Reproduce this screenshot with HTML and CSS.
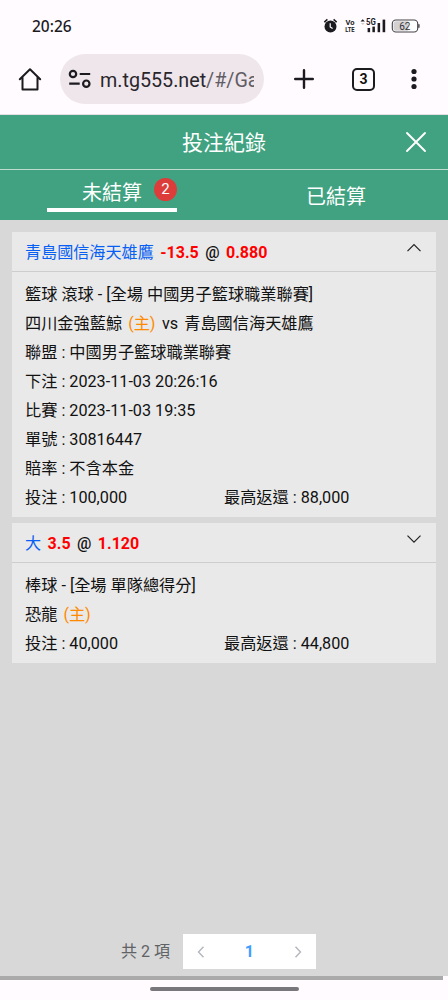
FILE: index.html
```html
<!DOCTYPE html>
<html lang="zh-Hant">
<head>
<meta charset="utf-8">
<meta name="viewport" content="width=device-width, initial-scale=1">
<title>投注紀錄</title>
<link rel="stylesheet" href="styles.css">
</head>
<body>
<div class="status-bar">
  <span class="clock">20:26</span>
  <svg class="status-icons" width="100" height="20" viewBox="0 0 100 20">
    <circle cx="7.500" cy="10.600" r="6" fill="#1c1b1f"/>
    <path d="M1.300 6.100 4.400 3.400M13.700 6.100 10.600 3.400" stroke="#1c1b1f" stroke-width="1.500"/>
    <path d="M7.200 7.200v3.800l2.400 1.600" fill="none" stroke="#fff" stroke-width="1.200"/>
    <g fill="#1c1b1f" class="icon-text">
      <text x="22.400" y="9" font-size="7.500" textLength="9" lengthAdjust="spacingAndGlyphs">Vo</text>
      <text x="22.200" y="16.400" font-size="7.500" textLength="9.400" lengthAdjust="spacingAndGlyphs">LTE</text>
      <text x="43" y="9.400" font-size="8.500" textLength="9.800" lengthAdjust="spacingAndGlyphs">5G</text>
      <path d="M37.500 5.600 39.700 3.300l2.200 2.300z"/>
      <path d="M38 7h3.600l-1.800 2z" fill="#ccc"/>
      <rect x="44.600" y="12" width="2.500" height="4.200"/>
      <rect x="49.400" y="10.600" width="2.500" height="5.600"/>
      <rect x="54.600" y="7" width="2.500" height="9.200"/>
      <rect x="59.600" y="3.600" width="2.600" height="12.600"/>
    </g>
    <rect x="69.300" y="4" width="25.400" height="12" rx="3.600" fill="#fff" stroke="#444347" stroke-width="1.100"/>
    <path d="M72.900 5.200h12.400v9.600H72.900a2.400 2.400 0 0 1-2.400-2.400V7.600a2.400 2.400 0 0 1 2.400-2.400z" fill="#d2d0d3"/>
    <rect x="95.200" y="8" width="1.400" height="4" rx=".7" fill="#444347"/>
    <text x="76.200" y="13.500" font-size="10" fill="#333" class="battery-text">62</text>
  </svg>
</div>
<div class="toolbar">
  <svg class="home" width="24" height="26" viewBox="0 0 24 26" fill="none" stroke="#1c1b1f" stroke-width="2" stroke-linejoin="round" stroke-linecap="round"><path d="M1.800 12.200 12 2.300 22.200 12.200M4.500 10.500V22.500h15V10.500"/></svg>
  <div class="address">
    <svg width="24" height="22" viewBox="0 0 24 22" fill="none" stroke="#1c1b1f" stroke-width="2.200"><circle cx="5" cy="6" r="3.200"/><circle cx="18.300" cy="15.700" r="3.200"/><path d="M11.700 6h10.500M1.200 15.700h10.500"/></svg>
    <span class="url">m.tg555.net<span class="path">/#/Ga</span></span>
  </div>
  <svg class="plus" width="20" height="20" viewBox="0 0 20 20" stroke="#1c1b1f" stroke-width="2.400" stroke-linecap="round"><path d="M10 1.200v17.600M1.200 10h17.600"/></svg>
  <span class="tab-count">3</span>
  <svg class="more" width="6" height="22" viewBox="0 0 6 22" fill="#1c1b1f"><circle cx="3" cy="3.500" r="2.600"/><circle cx="3" cy="11" r="2.600"/><circle cx="3" cy="18.500" r="2.600"/></svg>
</div>
<header class="title-bar">
  <h1>投注紀錄</h1>
  <svg class="close" width="22" height="22" viewBox="0 0 22 22" stroke="#fff" stroke-width="1.900" stroke-linecap="round"><path d="M2 2l18 18M20 2 2 20"/></svg>
</header>
<nav class="tabs">
  <div class="tab"><div class="tab-label active">未結算<span class="badge">2</span></div></div>
  <div class="tab"><div class="tab-label">已結算</div></div>
</nav>
<main class="content">
  <section class="card">
    <div class="card-head">
      <p><span class="team">青島國信海天雄鷹</span> <b>-13.5</b> <i>@</i> <b>0.880</b></p>
      <svg width="16" height="10" viewBox="0 0 16 10" fill="none" stroke="#222" stroke-width="1.200"><path d="M1.500 8.200 8 1.600l6.500 6.600"/></svg>
    </div>
    <div class="card-body">
      <p>籃球 滾球 - [全場 中國男子籃球職業聯賽]</p>
      <p>四川金強藍鯨 <span class="home-tag">(主)</span> vs <span class="away">青島國信海天雄鷹</span></p>
      <p>聯盟 : 中國男子籃球職業聯賽</p>
      <p>下注 : 2023-11-03 20:26:16</p>
      <p>比賽 : 2023-11-03 19:35</p>
      <p>單號 : 30816447</p>
      <p>賠率 : 不含本金</p>
      <div class="amounts"><p>投注 : 100,000</p><p>最高返還 : 88,000</p></div>
    </div>
  </section>
  <section class="card">
    <div class="card-head">
      <p><span class="team">大</span> <b>3.5</b> <i>@</i> <b>1.120</b></p>
      <svg width="16" height="10" viewBox="0 0 16 10" fill="none" stroke="#222" stroke-width="1.200"><path d="M1.500 1.600 8 8.200l6.500-6.600"/></svg>
    </div>
    <div class="card-body">
      <p>棒球 - [全場 單隊總得分]</p>
      <p>恐龍 <span class="home-tag">(主)</span></p>
      <div class="amounts"><p>投注 : 40,000</p><p>最高返還 : 44,800</p></div>
    </div>
  </section>
  <footer class="pagination">
    <span>共 2 項</span>
    <div class="pager">
      <svg width="10" height="14" viewBox="0 0 10 14"><path d="M7.500 1.700 2.500 7l5 5.300"/></svg>
      <strong>1</strong>
      <svg width="10" height="14" viewBox="0 0 10 14"><path d="M2.500 1.700 7.500 7l-5 5.300"/></svg>
    </div>
  </footer>
</main>
<div class="progress"></div>
<div class="gesture"><div class="handle"></div></div>
</body>
</html>
```

FILE: styles.css
```css
* { box-sizing: border-box; margin: 0; padding: 0; }
body {
  height: 1000px;
  display: flex;
  flex-direction: column;
  overflow: hidden;
  background: #fffbff;
  color: #111;
  font: 16px/29px Roboto, "Noto Sans CJK TC", sans-serif;
}
svg { display: block; flex: none; }
.status-bar {
  height: 44px;
  padding: 16px 25px 0 32px;
  display: flex;
  justify-content: space-between;
}
.clock { font: 500 15.5px/20px "Noto Sans", sans-serif; color: #1c1b1f; }
.icon-text { font-family: Roboto, sans-serif; font-weight: 700; }
.battery-text { font-family: Roboto, sans-serif; }
.toolbar {
  height: 71px;
  padding: 10px 31px 0 18px;
  display: flex;
  align-items: flex-start;
  border-bottom: 1px solid #e5dde2;
}
.home { margin-top: 13px; }
.address {
  width: 204px;
  height: 50px;
  margin-left: 18px;
  padding-left: 8px;
  display: flex;
  align-items: center;
  border-radius: 25px;
  background: #efe6ec;
}
.url {
  width: 154px;
  margin-left: 8px;
  padding-top: 2px;
  overflow: hidden;
  white-space: nowrap;
  font-size: 19.7px;
  color: #29272b;
}
.path { color: #615d64; }
.plus { margin: 15px 0 0 30px; }
.tab-count {
  width: 23px;
  height: 23px;
  margin: 14px 0 0 38px;
  border: 2px solid #1c1b1f;
  border-radius: 5px;
  font: 700 14px/19px Roboto, sans-serif;
  text-align: center;
}
.more { margin: 14px 0 0 36px; }
.title-bar {
  height: 55px;
  display: grid;
  grid-template-columns: 1fr auto 1fr;
  align-items: center;
  background: #40a280;
  border-bottom: 1px solid #bfdcd1;
  color: #fff;
}
.title-bar h1 { grid-column: 2; padding-top: 2px; font-size: 21px; font-weight: 400; }
.close { justify-self: end; margin-right: 21px; }
.tabs {
  height: 50px;
  display: grid;
  grid-template-columns: 1fr 1fr;
  background: #40a280;
  color: #fff;
  font-size: 20px;
}
.tab { display: flex; justify-content: center; align-items: center; }
.tab-label { padding-top: 4px; }
.tab-label.active {
  position: relative;
  width: 130px;
  height: 42px;
  padding: 9px 0 0;
  align-self: flex-start;
  border-bottom: 4px solid #fff;
  text-align: center;
}
.badge {
  position: absolute;
  top: 8px;
  right: 0;
  width: 23px;
  height: 23px;
  border-radius: 50%;
  background: #dc3d3a;
  font-size: 15px;
  line-height: 23px;
}
.content {
  height: 756px;
  padding: 12px 12px 7px;
  display: flex;
  flex-direction: column;
  gap: 6px;
  background: #d8d8d8;
}
.card { background: #e9e9e9; }
.card-head {
  height: 40px;
  padding: 0 14px 0 13px;
  display: flex;
  justify-content: space-between;
  border-bottom: 1px solid #cdcdcd;
  line-height: 41px;
}
.card-head svg { margin-top: 11px; }
.card-head b { color: #f00; margin-left: 2.5px; }
.card-head i { font-style: normal; font-weight: 500; margin-left: 2.5px; }
.team { color: #075ff3; font-size: 16.1px; }
.card-body { padding: 8px 13px 5px; font-size: 16.2px; }
.home-tag { color: #ff8a00; margin: 0 2.5px 0 2px; }
.away { margin-left: 2px; }
.amounts { display: grid; grid-template-columns: 1fr 1fr; }
.pagination {
  height: 35px;
  margin: auto 0 0 109px;
  display: flex;
  align-items: center;
  gap: 13px;
  color: #606266;
}
.pager {
  width: 133px;
  height: 35px;
  padding: 0 13px;
  display: flex;
  justify-content: space-between;
  align-items: center;
  background: #fff;
}
.pager svg { fill: none; stroke: #b3b6bd; stroke-width: 1.4; }
.pager strong { color: #409eff; }
.progress { width: 443px; height: 4px; background: #aaa; }
.gesture { flex: 1; display: flex; justify-content: center; padding-top: 7px; }
.handle { width: 149px; height: 4px; border-radius: 2px; background: #79777b; }
```
